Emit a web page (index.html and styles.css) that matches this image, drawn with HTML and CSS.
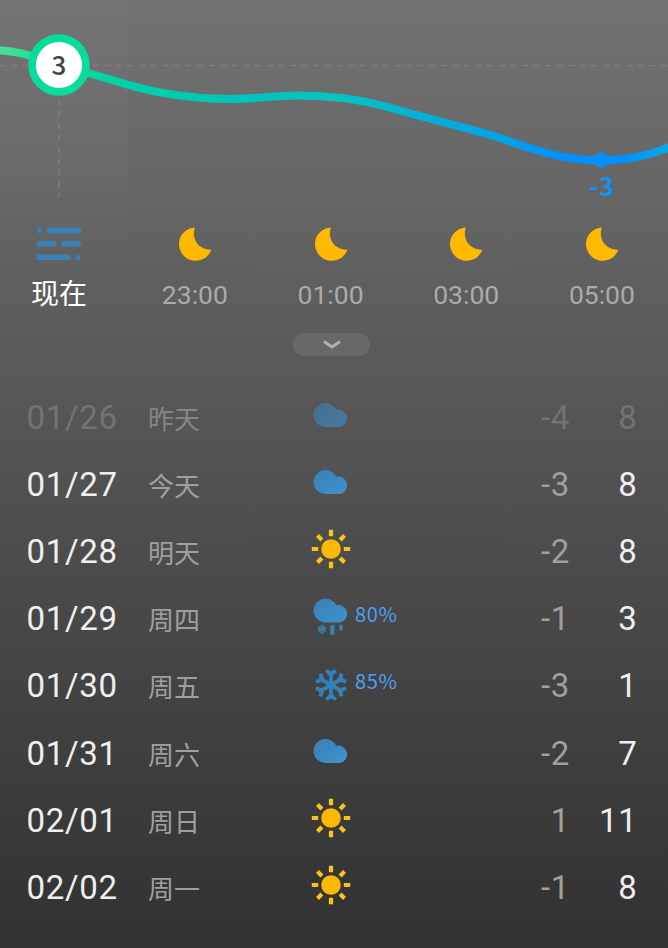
FILE: index.html
```
<!DOCTYPE html>
<html lang="zh-CN">
<head>
    <meta charset="utf-8">
    <title>天气</title>
    <meta name="viewport" content="width=device-width, initial-scale=1">
    <link rel="stylesheet" href="styles.css">
</head>
<body>
    <!-- Shared icons -->
    <svg class="symbols" width="0" height="0">
        <defs>
            <linearGradient id="cloud-fill" x1="0" y1="0" x2="1" y2="1">
                <stop offset="0" stop-color="#3a80b4"/>
                <stop offset="1" stop-color="#3f92cf"/>
            </linearGradient>
        </defs>
        <symbol id="moon" viewBox="0 0 34 34">
            <path d="M17 .4A16.7 16.7 0 1 0 33.4 22.7A16.2 16.2 0 0 1 17 .4Z" fill="#ffba00"/>
        </symbol>
        <symbol id="fog" viewBox="0 0 46 34">
            <g fill="#3b80b8">
                <rect x="1" y="1" width="5" height="5" rx="2"/>
                <rect x="11" y=".5" width="34" height="6" rx="1.5"/>
                <rect x=".5" y="14" width="20" height="5.5" rx="1.5"/>
                <rect x="25" y="14" width="20" height="5.5" rx="1.5"/>
                <rect x=".5" y="27.5" width="34" height="5.5" rx="1.5"/>
                <rect x="39.5" y="28" width="5" height="5" rx="2"/>
            </g>
        </symbol>
        <symbol id="cloud" viewBox="0 0 40 40">
            <path d="M14.500 32A12 12 0 1 1 25.300 14.800A8.800 8.800 0 1 1 29 32Z" fill="url(#cloud-fill)"/>
        </symbol>
        <symbol id="sun" viewBox="0 0 40 40">
            <circle cx="20" cy="20" r="9.8" fill="#ffb800"/>
            <g stroke="#f8c51c" stroke-width="4.2">
                <path d="M20 .8v6.4M20 32.8v6.4M.8 20h6.4M32.8 20h6.4"/>
                <path d="M6.5 6.5l4.4 4.4M29.1 29.1l4.4 4.4M33.5 6.5l-4.4 4.4M10.9 29.1l-4.4 4.4"/>
            </g>
        </symbol>
        <symbol id="sleet" viewBox="0 0 40 40">
            <path d="M14.500 25.500A12 12 0 1 1 25.300 8.300A8.800 8.800 0 1 1 29 25.500Z" fill="url(#cloud-fill)"/>
            <g stroke="#3a80b4" stroke-width="1.1" fill="none">
                <path d="M11 27.7v9M7.1 29.9l7.8 4.5M14.9 29.9l-7.8 4.5"/>
                <path d="M9.5 28.3l1.5 1.4l1.5-1.4M9.5 36.1l1.5-1.4l1.5 1.4M7 31.8l2-.5v-2M15 32.5l-2 .5v2M13 29.3v2l2 .5M9 35v-2l-2-.5"/>
            </g>
            <rect x="19.3" y="28" width="4" height="10" rx=".8" fill="#3a80b4"/>
            <rect x="28.3" y="27.8" width="3.4" height="5.7" rx=".8" fill="#3a80b4"/>
        </symbol>
        <symbol id="snow" viewBox="0 0 40 40">
            <g stroke="#3480b8" stroke-width="3.8" fill="none">
                <path id="flake-arm" d="M20 21V7M15.4 6.2L20 11L24.6 6.2"/>
                <use href="#flake-arm" transform="rotate(60 20 21)"/>
                <use href="#flake-arm" transform="rotate(120 20 21)"/>
                <use href="#flake-arm" transform="rotate(180 20 21)"/>
                <use href="#flake-arm" transform="rotate(240 20 21)"/>
                <use href="#flake-arm" transform="rotate(300 20 21)"/>
            </g>
        </symbol>
    </svg>

    <div class="weather">
        <!-- Temperature curve -->
        <svg class="chart" viewBox="0 0 668 222">
            <defs>
                <linearGradient id="temp" gradientUnits="userSpaceOnUse" x1="0" y1="0" x2="668" y2="0">
                    <stop offset="0" stop-color="#4be08f"/>
                    <stop offset=".08" stop-color="#08dc9a"/>
                    <stop offset=".19" stop-color="#00d1aa"/>
                    <stop offset=".34" stop-color="#00c5bb"/>
                    <stop offset=".5" stop-color="#06c4c0"/>
                    <stop offset=".62" stop-color="#04b2d6"/>
                    <stop offset=".74" stop-color="#02a4e6"/>
                    <stop offset=".84" stop-color="#0090ff"/>
                    <stop offset=".93" stop-color="#0090ff"/>
                    <stop offset="1" stop-color="#06a9e4"/>
                </linearGradient>
            </defs>
            <path class="guide" d="M0 65.5H668M59 100V197"/>
            <path class="curve" d="M-4 50C22 51 36 58 59 65C82 71 104 77.500 127 84.500C160 94 195 99 230 99C256 99 272 95.500 298 95.500C326 95.500 355 98 384 106C417 115.500 450 124 484 133C511 141 537 152 564 157C577 159.500 589 160 602 160C628 160 648 156 672 146"/>
            <circle cx="601.500" cy="160" r="7.500" fill="#0090ff"/>
            <text class="low-label" x="601.500" y="196" text-anchor="middle">-3</text>
            <circle class="now-ring" cx="59" cy="65" r="26.900"/>
            <text class="now-label" x="59" y="74.500" text-anchor="middle">3</text>
        </svg>

        <!-- Hourly -->
        <div class="hours">
            <div class="hour now">
                <svg class="fog"><use href="#fog"/></svg>
                <span>现在</span>
            </div>
            <div class="hour">
                <svg class="moon"><use href="#moon"/></svg>
                <span>23:00</span>
            </div>
            <div class="hour">
                <svg class="moon"><use href="#moon"/></svg>
                <span>01:00</span>
            </div>
            <div class="hour">
                <svg class="moon"><use href="#moon"/></svg>
                <span>03:00</span>
            </div>
            <div class="hour">
                <svg class="moon"><use href="#moon"/></svg>
                <span>05:00</span>
            </div>
        </div>

        <button class="expand">
            <svg viewBox="0 0 20 10"><path d="M2 1.500L10 7L18 1.500"/></svg>
        </button>

        <!-- Daily -->
        <div class="days">
            <div class="day past">
                <span class="date">01/26</span>
                <span class="name">昨天</span>
                <span class="sky"><svg><use href="#cloud"/></svg></span>
                <span class="low">-4</span>
                <span class="high">8</span>
            </div>
            <div class="day">
                <span class="date">01/27</span>
                <span class="name">今天</span>
                <span class="sky"><svg><use href="#cloud"/></svg></span>
                <span class="low">-3</span>
                <span class="high">8</span>
            </div>
            <div class="day">
                <span class="date">01/28</span>
                <span class="name">明天</span>
                <span class="sky"><svg><use href="#sun"/></svg></span>
                <span class="low">-2</span>
                <span class="high">8</span>
            </div>
            <div class="day">
                <span class="date">01/29</span>
                <span class="name">周四</span>
                <span class="sky"><svg><use href="#sleet"/></svg><span class="chance">80%</span></span>
                <span class="low">-1</span>
                <span class="high">3</span>
            </div>
            <div class="day">
                <span class="date">01/30</span>
                <span class="name">周五</span>
                <span class="sky"><svg><use href="#snow"/></svg><span class="chance">85%</span></span>
                <span class="low">-3</span>
                <span class="high">1</span>
            </div>
            <div class="day">
                <span class="date">01/31</span>
                <span class="name">周六</span>
                <span class="sky"><svg><use href="#cloud"/></svg></span>
                <span class="low">-2</span>
                <span class="high">7</span>
            </div>
            <div class="day">
                <span class="date">02/01</span>
                <span class="name">周日</span>
                <span class="sky"><svg><use href="#sun"/></svg></span>
                <span class="low">1</span>
                <span class="high">11</span>
            </div>
            <div class="day">
                <span class="date">02/02</span>
                <span class="name">周一</span>
                <span class="sky"><svg><use href="#sun"/></svg></span>
                <span class="low">-1</span>
                <span class="high">8</span>
            </div>
        </div>
    </div>
</body>
</html>
```

FILE: styles.css
```
body {
    margin: 0;
    font-family: Roboto, "Noto Sans CJK SC", sans-serif;
    background: #313131;
}
.symbols {
    display: block;
}
.weather {
    width: 668px;
    height: 948px;
    overflow: hidden;
    background:
        linear-gradient(rgba(255,255,255,0.01), rgba(255,255,255,0.025) 60%, rgba(255,255,255,0)) 0 0 / 128px 260px no-repeat,
        linear-gradient(#727272, #656565 200px, #595959 370px, #313131);
}
.chart {
    display: block;
    width: 668px;
    height: 222px;
}
.guide {
    fill: none;
    stroke: #7e7e7e;
    stroke-width: 1.5;
    stroke-dasharray: 6 5.6;
}
.curve {
    fill: none;
    stroke: url(#temp);
    stroke-width: 8;
}
.now-ring {
    fill: #fff;
    stroke: #08dc9a;
    stroke-width: 7.7;
}
.now-label,
.low-label {
    font-family: "Noto Sans CJK SC", sans-serif;
    font-size: 26px;
    font-weight: 500;
}
.now-label {
    fill: #444;
}
.low-label {
    fill: #1590ee;
    font-weight: 700;
}
.hours {
    display: grid;
    grid-template-columns: 127px repeat(4, 135.7px);
    height: 111px;
}
.hour {
    display: flex;
    flex-direction: column;
    align-items: center;
    padding-top: 5px;
    color: #ababab;
    font-size: 26.5px;
    line-height: 36px;
}
.hour span {
    margin-top: 16px;
}
.now {
    padding-right: 9px;
    color: #fff;
    font-size: 28px;
}
.moon {
    width: 34px;
    height: 34px;
}
.fog {
    width: 46px;
    height: 34px;
}
.expand {
    display: flex;
    align-items: center;
    justify-content: center;
    width: 77px;
    height: 23px;
    margin: 0 0 0 293px;
    padding: 0;
    border: none;
    border-radius: 12px;
    background: #686868;
}
.expand svg {
    width: 20px;
    height: 10px;
    fill: none;
    stroke: #b0b0b0;
    stroke-width: 3;
}
.days {
    padding-top: 27.5px;
}
.day {
    display: grid;
    grid-template-columns: 121.5px 163px 165px 94px 67.5px;
    align-items: center;
    height: 67.2px;
    padding: 0 30px 0 26.5px;
    color: #efefef;
    font-size: 33px;
    font-weight: 450;
    letter-spacing: 0.7px;
}
.name {
    color: #9f9f9f;
    font-size: 26px;
    font-weight: 400;
    letter-spacing: 0;
}
.sky {
    display: flex;
    align-items: center;
    margin-top: -4px;
}
.sky svg {
    width: 40px;
    height: 40px;
}
.chance {
    margin: -6px 0 0 4px;
    color: #519ef4;
    font-family: "Noto Sans CJK SC", sans-serif;
    font-size: 20px;
    font-weight: 400;
    letter-spacing: 0.6px;
}
.low,
.high {
    text-align: right;
}
.low {
    color: #9f9f9f;
}
.past .date,
.past .low,
.past .high {
    color: #737373;
}
.past .name {
    color: #858585;
}
.past .sky {
    opacity: 0.6;
}
```
